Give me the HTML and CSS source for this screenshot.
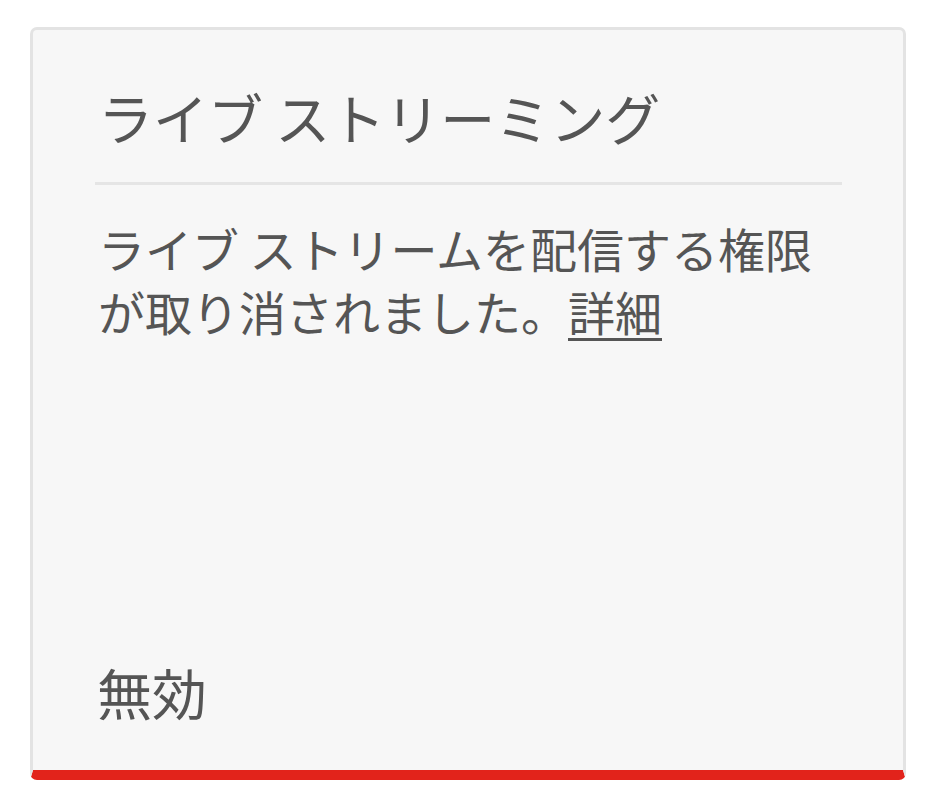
FILE: index.html
```html
<!DOCTYPE html>
<html lang="ja">
<head>
<meta charset="utf-8">
<link rel="stylesheet" href="styles.css">
</head>
<body>
<div class="card">
  <h2 class="title">ライブ ストリーミング</h2>
  <div class="divider"></div>
  <p class="desc">ライブ ストリームを配信する権限が取り消されました。<a class="link" href="#">詳細</a></p>
  <div class="status">無効</div>
</div>
</body>
</html>
```
FILE: styles.css
```css
html, body {
  margin: 0;
  padding: 0;
  background: #ffffff;
}
body {
  font-family: "Noto Sans CJK JP", "Noto Sans", sans-serif;
  color: #555555;
}
.card {
  box-sizing: border-box;
  margin: 27px 0 0 30px;
  width: 876px;
  height: 753px;
  background: #f7f7f7;
  border: 3px solid #e3e3e3;
  border-bottom: 10px solid #e2231b;
  border-radius: 7px;
  padding: 0 61px 0 62px;
  display: flex;
  flex-direction: column;
}
.title {
  margin: 0;
  padding: 48px 0 0 3px;
  font-size: 55px;
  font-weight: 400;
  line-height: 76px;
  letter-spacing: 0;
}
.divider {
  height: 3px;
  background: #e5e5e5;
  margin-top: 28px;
}
.desc {
  margin: 31px 0 0 0;
  padding-left: 3px;
  font-size: 47px;
  line-height: 63px;
}
.link {
  color: #555555;
  text-decoration: underline;
  text-underline-offset: 7px;
  text-decoration-thickness: 3px;
}
.status {
  margin-top: auto;
  margin-bottom: 41px;
  padding-left: 2px;
  font-size: 55px;
  line-height: 76px;
}
```
